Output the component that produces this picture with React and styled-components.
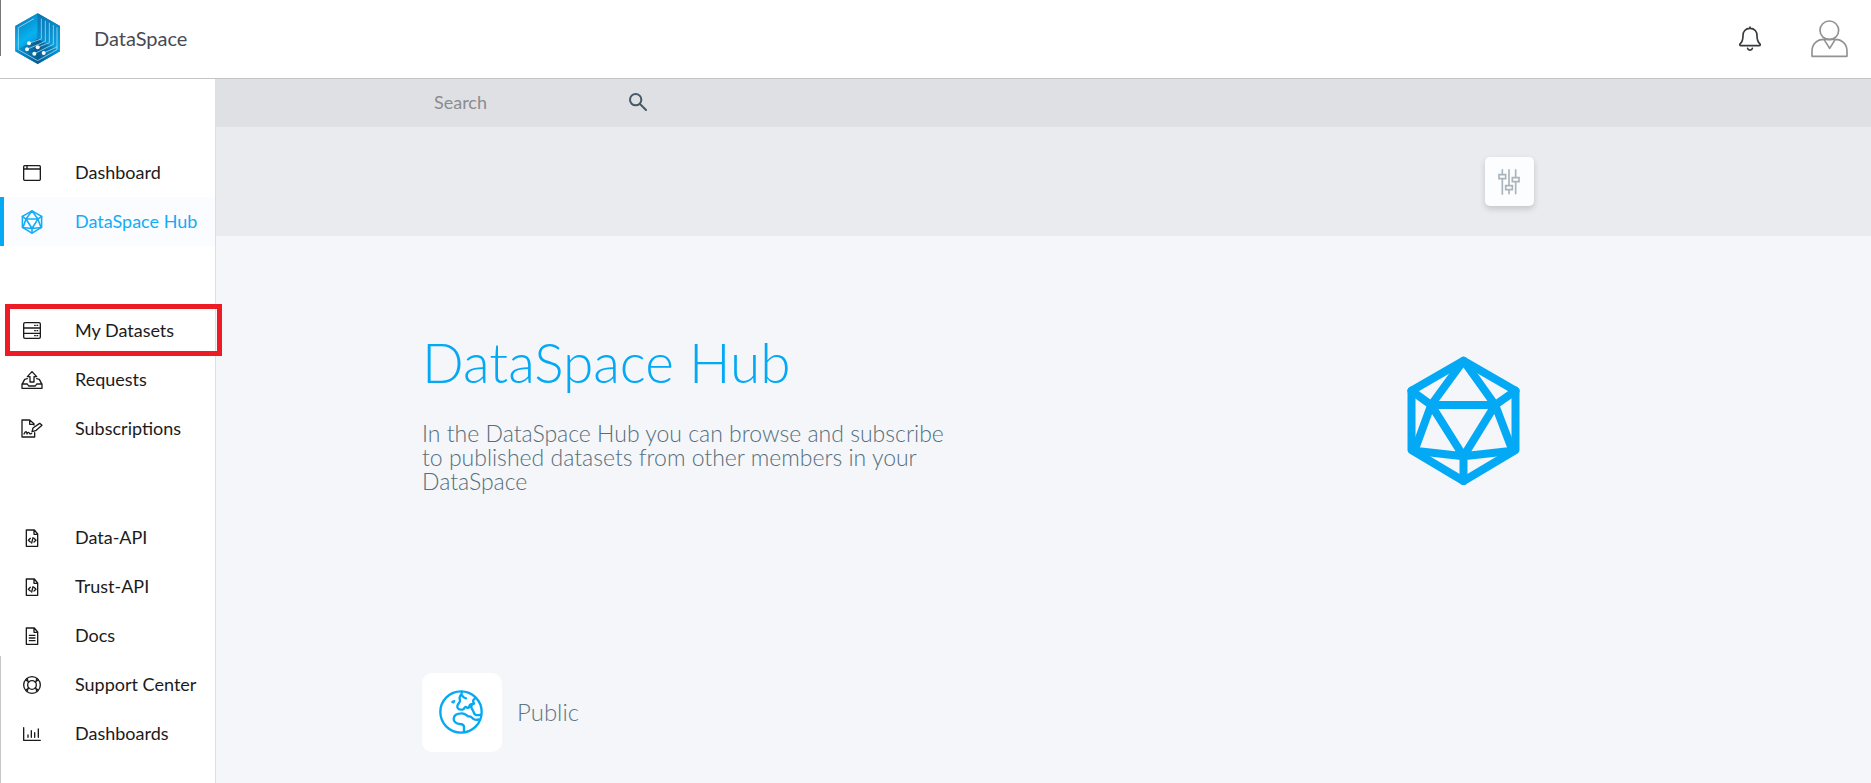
import React from "react";
import styled, { createGlobalStyle, css } from "styled-components";

const GlobalStyle = createGlobalStyle`
  *, *::before, *::after { box-sizing: border-box; }
  body {
    margin: 0;
    background: #f4f6fa;
    font-family: Lato, "Liberation Sans", sans-serif;
    color: #1b1b1b;
  }
  svg { display: block; flex: none; }
`;

const Page = styled.div`
  display: flex;
  flex-direction: column;
  min-height: 100vh;
`;

const Header = styled.header`
  position: relative;
  display: flex;
  align-items: center;
  height: 79px;
  padding: 0 23px 0 15px;
  background: #fff;
  border-bottom: 1px solid #c4c5c7;

  &::before {
    content: "";
    position: absolute;
    left: 0;
    top: 0;
    width: 1px;
    height: 56px;
    background: #77787a;
  }
`;

const Brand = styled.a`
  display: flex;
  align-items: center;
  gap: 33px;
  color: #464a52;
  font-size: 20px;
  line-height: 24px;
  text-decoration: none;
`;

const HeaderActions = styled.div`
  display: flex;
  align-items: center;
  gap: 50px;
  margin-left: auto;
`;

const IconButton = styled.button`
  display: grid;
  place-items: center;
  padding: 0;
  border: 0;
  background: none;
  color: ${(p) => p.$color};
  cursor: pointer;
`;

const Body = styled.div`
  display: flex;
  flex: 1;
`;

const Sidebar = styled.nav`
  position: relative;
  display: flex;
  flex-direction: column;
  flex: none;
  gap: 60px;
  width: 216px;
  padding-top: 69px;
  background: #fff;
  border-right: 1px solid #dcdee3;

  &::before {
    content: "";
    position: absolute;
    left: 0;
    top: 577px;
    bottom: 0;
    width: 1px;
    background: #c6c6c6;
  }
`;

const NavGroup = styled.ul`
  margin: 0;
  padding: 0;
  list-style: none;
`;

const NavItem = styled.li`
  position: relative;
  ${(p) =>
    p.$highlighted &&
    css`
      &::after {
        content: "";
        position: absolute;
        inset: -2px -7px -1px 5px;
        border: 5px solid #ed1c24;
        pointer-events: none;
      }
    `}
`;

const NavLink = styled.a`
  display: flex;
  align-items: center;
  gap: 31px;
  height: 49px;
  padding-left: 16px;
  border-left: 4px solid ${(p) => (p.$active ? "#03a9f4" : "transparent")};
  background: ${(p) => (p.$active ? "#fbfcff" : "transparent")};
  color: ${(p) => (p.$active ? "#12adf5" : "#1b1b1b")};
  font-size: 18px;
  line-height: 24px;
  text-decoration: none;
  white-space: nowrap;
`;

const NavIcon = styled.span`
  display: grid;
  place-items: center;
  width: 24px;
`;

const NavLabel = styled.span`
  padding-bottom: 2px;
`;

const Main = styled.main`
  flex: 1;
  min-width: 0;
`;

const Container = styled.div`
  display: flex;
  align-items: center;
  width: 100%;
  max-width: 1245px;
  margin: 0 auto;
`;

const SearchBand = styled.div`
  display: flex;
  height: 48px;
  background: #dfe0e4;
`;

const SearchForm = styled.form`
  display: flex;
  align-items: center;
  width: 226px;
  padding: 0 0 2px 13px;
`;

const SearchInput = styled.input`
  flex: 1;
  min-width: 0;
  padding: 0;
  border: 0;
  outline: 0;
  background: none;
  color: #455a64;
  font: 400 18px/24px Lato, "Liberation Sans", sans-serif;

  &::placeholder { color: #8b8c8f; opacity: 1; }
`;

const FilterBand = styled.div`
  display: flex;
  height: 109px;
  background: #eaebee;
`;

const FilterRow = styled(Container)`
  justify-content: flex-end;
  padding-right: 132px;
`;

const FilterButton = styled.button`
  display: grid;
  place-items: center;
  width: 49px;
  height: 49px;
  padding: 0 2px 0 0;
  border: 0;
  border-radius: 5px;
  background: #fcfdff;
  box-shadow: 0 3px 6px rgba(0, 0, 0, 0.16);
  color: #a9b4bc;
  cursor: pointer;
`;

const Hero = styled(Container)`
  justify-content: space-between;
  padding: 94px 146px 0 1px;
`;

const Intro = styled.div`
  width: 530px;
`;

const Title = styled.h1`
  margin: 0 0 27px;
  color: #03a9f4;
  font-size: 55px;
  font-weight: 300;
  line-height: 64px;
`;

const Lead = styled.p`
  margin: 0;
  color: #546e7a;
  font-size: 23px;
  font-weight: 300;
  line-height: 24px;
`;

const HubMark = styled.div`
  padding-top: 18px;
  color: #03a9f4;
`;

const Category = styled(Container)`
  gap: 15px;
  padding: 180px 0 24px 1px;
`;

const CategoryTile = styled.button`
  display: grid;
  place-items: center;
  width: 80px;
  height: 79px;
  padding: 0 2px 2px 0;
  border: 0;
  border-radius: 10px;
  background: #fff;
  color: #03a9f4;
  cursor: pointer;
`;

const CategoryLabel = styled.label`
  padding-bottom: 2px;
  color: #607580;
  font-size: 24px;
  font-weight: 300;
  line-height: 28px;
`;

const Svg = ({ w, h, box, sw = 4, children }) => (
  <svg
    width={w}
    height={h}
    viewBox={box || `0 0 ${w} ${h}`}
    fill="none"
    stroke="currentColor"
    strokeWidth={sw}
    strokeLinejoin="round"
    strokeLinecap="round"
    aria-hidden="true"
  >
    {children}
  </svg>
);

const Logo = () => (
  <svg width="46" height="52" viewBox="45 40 138 156" fill="none" aria-hidden="true">
    <defs>
      <linearGradient id="logoLeft" x1="50" y1="70" x2="106" y2="150" gradientUnits="userSpaceOnUse">
        <stop offset="0" stopColor="#0a86c6" />
        <stop offset=".55" stopColor="#06b2f0" />
        <stop offset="1" stopColor="#0a8ac8" />
      </linearGradient>
      <linearGradient id="logoRight" x1="113" y1="50" x2="180" y2="160" gradientUnits="userSpaceOnUse">
        <stop offset="0" stopColor="#0a76b5" />
        <stop offset=".55" stopColor="#0c92d0" />
        <stop offset="1" stopColor="#05aae8" />
      </linearGradient>
      <linearGradient id="logoBase" x1="50" y1="150" x2="178" y2="150" gradientUnits="userSpaceOnUse">
        <stop offset="0" stopColor="#0795d5" />
        <stop offset=".5" stopColor="#065c92" />
        <stop offset="1" stopColor="#079bd9" />
      </linearGradient>
    </defs>
    <path d="M113 41 180 79v76l-67 38-67-38V79z" fill="#0878b4" />
    <path d="M113 41v77l-67 37V79z" fill="url(#logoLeft)" />
    <path d="M113 41 180 79v76l-67-37z" fill="url(#logoRight)" />
    <path d="M46 155l67-37 67 37-67 38z" fill="url(#logoBase)" />
    <g stroke="#c3e8f8" strokeWidth="2" strokeLinejoin="round">
      <path d="M102 57 55 84v66l58 33 58-33V83" />
      <path d="M124 57v61l-37 13M136 63v62l-55 24M148 69v60l-35 14M160 76v58l-57 28M171 142l-40 18" />
    </g>
    <g fill="#f3fbff">
      <circle cx="87" cy="131" r="6" />
      <circle cx="81" cy="149" r="6" />
      <circle cx="113" cy="143" r="6" />
      <circle cx="103" cy="162" r="6" />
      <circle cx="131" cy="160" r="6" />
    </g>
  </svg>
);

const HubIcon = ({ w, h, sw = 24 }) => (
  <Svg w={w} h={h} box="80 50 338 390" sw={sw}>
    <path d="M249 64 405 154v178l-156 93-156-93V154z" />
    <path d="M249 64 152 197h192zM152 197l97 154 95-154M93 154l59 43-50 137 147 17 147-17-52-137 61-43M249 351v74" />
  </Svg>
);

const BellIcon = () => (
  <Svg w={22} h={26} box="116 79 66 78" sw={5}>
    <path d="M149 82v4M149 86c-14 0-21 10-21 22 0 14-3 19-8 24-3 3-2 6 2 6h54c4 0 5-3 2-6-5-5-8-10-8-24 0-12-7-22-21-22zM142 146c1 7 13 7 14 0" />
  </Svg>
);

const UserIcon = () => (
  <Svg w={37} h={38} box="332 61 111 114" sw={5}>
    <circle cx="387" cy="92" r="28" />
    <path d="M371 119c-21 0-36 14-36 35v16h105v-16c0-21-15-35-36-35M371 119l17 27 17-27M371 119h34" />
  </Svg>
);

const SearchIcon = () => (
  <Svg w={18} h={18} box="687 70 54 54" sw={6}>
    <circle cx="707" cy="90" r="17" />
    <path d="m720 103 18 18" />
  </Svg>
);

const SlidersIcon = () => (
  <svg width="22" height="26" viewBox="114 118 66 78" fill="none" stroke="currentColor" strokeWidth="5" aria-hidden="true">
    <path d="M127 119v16M127 147v48M147 119v48M147 180v14M167 119v25M167 156v38" />
    <path d="M117 135h20v12h-20zM137 168h20v12h-20zM157 144h20v12h-20z" />
  </svg>
);

const GlobeIcon = () => (
  <Svg w={44} h={44} box="119 119 132 132" sw={7}>
    <circle cx="185" cy="185" r="62" />
    <path d="M187 124c3 7-5 10-6 17-1 8 3 10 0 14-4 5-10 10-6 18 3 6 11 5 16 4 4-1 4-7 8-7s5 4 9 2c4-3 0-7 5-9 4-2 8-2 11-3M200 144c-6-1-9-4-12-9M218 163c-5 7 0 14 3 18 4 5 1 11 9 13 5 1 9 0 15-1M224 159c-4-5-4-10 2-14" />
    <path d="M194 245v-14c0-9-6-10-13-10-9-1-19-7-18-16 1-11 12-16 25-16 10 0 13 7 18 9 5 1 8-1 12 4 4 6 12 8 20 5" />
    <path d="M157 155c2-3 6-4 9-4 0 3-1 5-4 7z" fill="currentColor" strokeWidth="4" />
  </Svg>
);

const WindowIcon = () => (
  <Svg w={18} h={16} box="69 72 54 48">
    <rect x="71" y="74" width="50" height="44" rx="3" />
    <path d="M71 84h50M81 75v8" />
  </Svg>
);

const ServerIcon = () => (
  <Svg w={18} h={17} box="69 95 54 51">
    <rect x="71" y="97" width="50" height="47" rx="4" />
    <path d="M72 113h48M72 129h48M104 105h2M111 105h2M104 121h2M111 121h2M104 136h2M111 136h2" />
  </Svg>
);

const InboxIcon = () => (
  <Svg w={22} h={18} box="62 240 66 54">
    <path d="M89 273v-16h-8l14-15 14 15h-8v16zM81 263l-8 2-8 15v12h60v-12l-8-15-8-2M65 279h16l4 6h20l4-6h16" />
  </Svg>
);

const ContractIcon = () => (
  <Svg w={22} h={19} box="62 389 66 57">
    <path d="M103 430v13H65v-51h23l13 11v4M88 392v13h12M95 427l3-11 20-14 7 6-19 16zM71 434c4-8 8-10 9 0 3-6 6-6 8-1 2 2 4 0 6-1" />
  </Svg>
);

const FileShape = () => <path d="M78 57h24l10 12v37H78zM101 58v12h11" />;

const CodeFileIcon = () => (
  <Svg w={14} h={18} box="74 54 42 54">
    <FileShape />
    <path d="m90 82-6 6 6 5M101 82l6 6-6 5M98 80l-4 16" />
  </Svg>
);

const DocIcon = () => (
  <Svg w={14} h={18} box="74 54 42 54">
    <FileShape />
    <path d="M87 79h17M87 87h17M87 95h17" />
  </Svg>
);

const LifebuoyIcon = () => (
  <Svg w={18} h={18} box="69 110 54 54">
    <circle cx="96" cy="137" r="25" />
    <circle cx="96" cy="137" r="13" />
    <path d="m81 117 4 12M77 122l10 6M111 117l-4 12M115 122l-10 6M81 157l4-12M77 152l10-6M111 157l-4-12M115 152l-10-6" />
  </Svg>
);

const ChartIcon = () => (
  <Svg w={18} h={14} box="69 264 54 42">
    <path d="M71 266v38h50M84 288v7M94 275v20M104 281v14M115 270v25" />
  </Svg>
);

const NAV_GROUPS = [
  [
    { label: "Dashboard", icon: <WindowIcon /> },
    { label: "DataSpace Hub", icon: <HubIcon w={22} h={24} sw={26} />, active: true },
  ],
  [
    { label: "My Datasets", icon: <ServerIcon />, highlighted: true },
    { label: "Requests", icon: <InboxIcon /> },
    { label: "Subscriptions", icon: <ContractIcon /> },
  ],
  [
    { label: "Data-API", icon: <CodeFileIcon /> },
    { label: "Trust-API", icon: <CodeFileIcon /> },
    { label: "Docs", icon: <DocIcon /> },
    { label: "Support Center", icon: <LifebuoyIcon /> },
    { label: "Dashboards", icon: <ChartIcon /> },
  ],
];

export default function App() {
  return (
    <Page>
      <GlobalStyle />
      <Header>
        <Brand href="#">
          <Logo />
          <NavLabel>DataSpace</NavLabel>
        </Brand>
        <HeaderActions>
          <IconButton type="button" aria-label="Notifications" $color="#37393d">
            <BellIcon />
          </IconButton>
          <IconButton type="button" aria-label="Account" $color="#929292">
            <UserIcon />
          </IconButton>
        </HeaderActions>
      </Header>
      <Body>
        <Sidebar aria-label="Main">
          {NAV_GROUPS.map((items) => (
            <NavGroup key={items[0].label}>
              {items.map((item) => (
                <NavItem key={item.label} $highlighted={item.highlighted}>
                  <NavLink href="#" $active={item.active}>
                    <NavIcon>{item.icon}</NavIcon>
                    <NavLabel>{item.label}</NavLabel>
                  </NavLink>
                </NavItem>
              ))}
            </NavGroup>
          ))}
        </Sidebar>
        <Main>
          <SearchBand>
            <Container>
              <SearchForm role="search">
                <SearchInput type="text" placeholder="Search" aria-label="Search" />
                <IconButton type="submit" aria-label="Submit search" $color="#455a64">
                  <SearchIcon />
                </IconButton>
              </SearchForm>
            </Container>
          </SearchBand>
          <FilterBand>
            <FilterRow>
              <FilterButton type="button" aria-label="Filters">
                <SlidersIcon />
              </FilterButton>
            </FilterRow>
          </FilterBand>
          <Hero>
            <Intro>
              <Title>DataSpace Hub</Title>
              <Lead>
                In the DataSpace Hub you can browse and subscribe to published datasets from
                other members in your DataSpace
              </Lead>
            </Intro>
            <HubMark>
              <HubIcon w={113} h={130} />
            </HubMark>
          </Hero>
          <Category>
            <CategoryTile type="button" id="category-public">
              <GlobeIcon />
            </CategoryTile>
            <CategoryLabel htmlFor="category-public">Public</CategoryLabel>
          </Category>
        </Main>
      </Body>
    </Page>
  );
}
